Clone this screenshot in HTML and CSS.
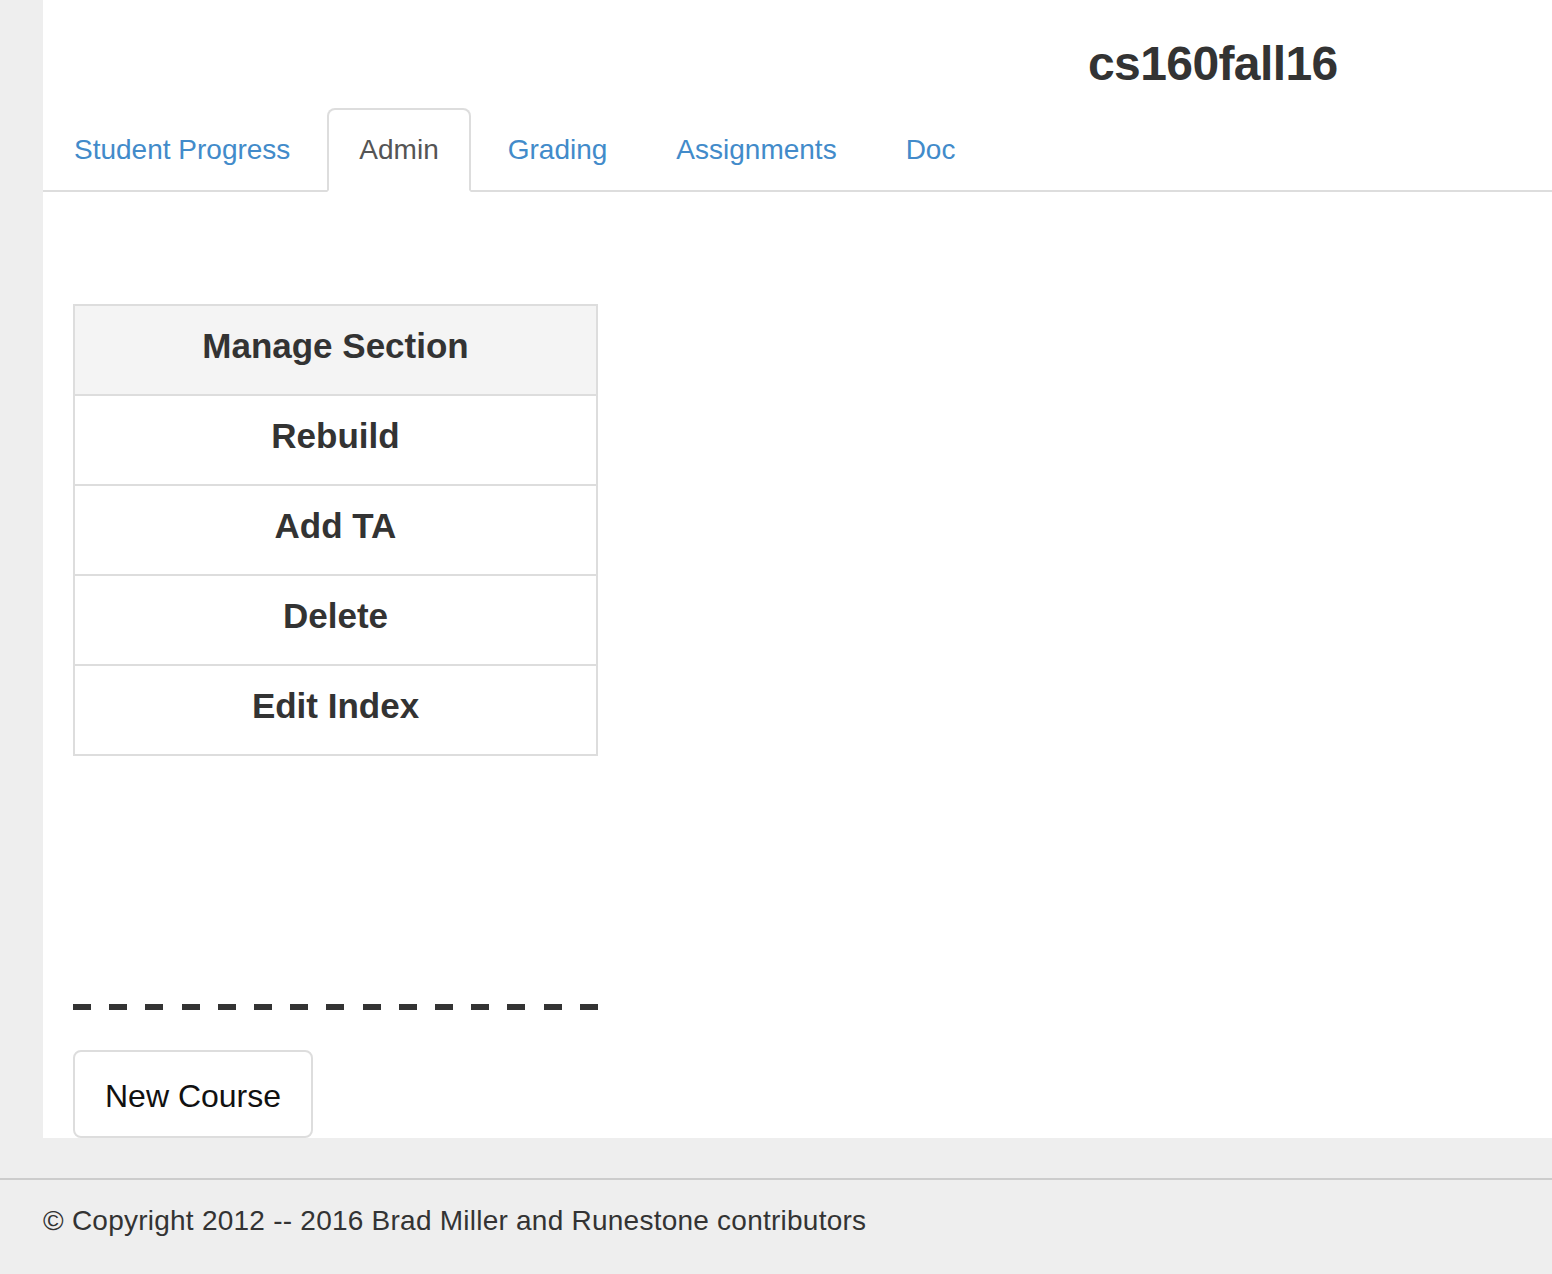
FILE: index.html
```html
<!DOCTYPE html>
<html lang="en">
<head>
<meta charset="utf-8">
<title>cs160fall16 - Admin</title>
<link rel="stylesheet" href="styles.css">
</head>
<body>
<div class="page">
  <header class="masthead">
    <h1 class="course-title">cs160fall16</h1>
  </header>
  <ul class="nav-tabs">
    <li><a href="#">Student Progress</a></li>
    <li class="active"><a href="#">Admin</a></li>
    <li><a href="#">Grading</a></li>
    <li><a href="#">Assignments</a></li>
    <li><a href="#">Doc</a></li>
  </ul>
  <main class="content">
    <table class="admin-table">
      <tbody>
        <tr><td class="head">Manage Section</td></tr>
        <tr><td>Rebuild</td></tr>
        <tr><td>Add TA</td></tr>
        <tr><td>Delete</td></tr>
        <tr><td>Edit Index</td></tr>
      </tbody>
    </table>
    <hr class="dash">
    <button class="btn" type="button">New Course</button>
  </main>
</div>
<footer class="footer">
  <p>&copy; Copyright 2012 -- 2016 Brad Miller and Runestone contributors</p>
</footer>
</body>
</html>
```

FILE: styles.css
```css
html, body {
  margin: 0;
  padding: 0;
}
body {
  background: #eeeeee;
  font-family: "Liberation Sans", Arial, Helvetica, sans-serif;
  color: #333333;
}
.page {
  margin-left: 43px;
  background: #ffffff;
}
.masthead {
  height: 108px;
  padding-left: 1045px;
  box-sizing: border-box;
}
.course-title {
  margin: 0;
  padding-top: 36px;
  font-size: 48px;
  line-height: 55px;
  font-weight: bold;
  letter-spacing: -0.6px;
  color: #333333;
}
.nav-tabs {
  display: flex;
  list-style: none;
  margin: 0;
  padding: 0;
  border-bottom: 2px solid #dddddd;
}
.nav-tabs li {
  margin: 0 5px -2px 0;
}
.nav-tabs a {
  display: block;
  padding: 20px 30px;
  font-size: 28px;
  line-height: 40px;
  border: 2px solid transparent;
  border-radius: 8px 8px 0 0;
  color: #428bca;
  text-decoration: none;
}
.nav-tabs li:first-child a {
  padding-left: 29px;
}
.nav-tabs .active a {
  color: #555555;
  background: #ffffff;
  border-color: #dddddd;
  border-bottom-color: transparent;
}
.content {
  padding: 112px 0 0 30px;
}
.admin-table {
  width: 525px;
  border-collapse: collapse;
}
.admin-table td {
  border: 2px solid #dddddd;
  height: 88px;
  box-sizing: border-box;
  padding: 20px 0 28px;
  text-align: center;
  vertical-align: top;
  font-size: 35px;
  line-height: 40px;
  font-weight: bold;
  color: #333333;
}
.admin-table td.head {
  background: #f4f4f4;
}
.dash {
  width: 525px;
  height: 6px;
  margin: 248px 0 40px 0;
  border: 0;
  background: repeating-linear-gradient(to right, #333333 0, #333333 18px, transparent 18px, transparent 36.2px);
}
.btn {
  display: block;
  margin: 0;
  padding: 4px 30px 0;
  font-family: inherit;
  font-size: 32px;
  line-height: 80px;
  color: #111111;
  background: #ffffff;
  border: 2px solid #dddddd;
  border-radius: 8px;
}
.footer {
  margin-top: 40px;
  border-top: 2px solid #cccccc;
  padding: 21px 0 0 43px;
}
.footer p {
  margin: 0;
  font-size: 28px;
  line-height: 40px;
  letter-spacing: 0.24px;
  color: #333333;
}
```
